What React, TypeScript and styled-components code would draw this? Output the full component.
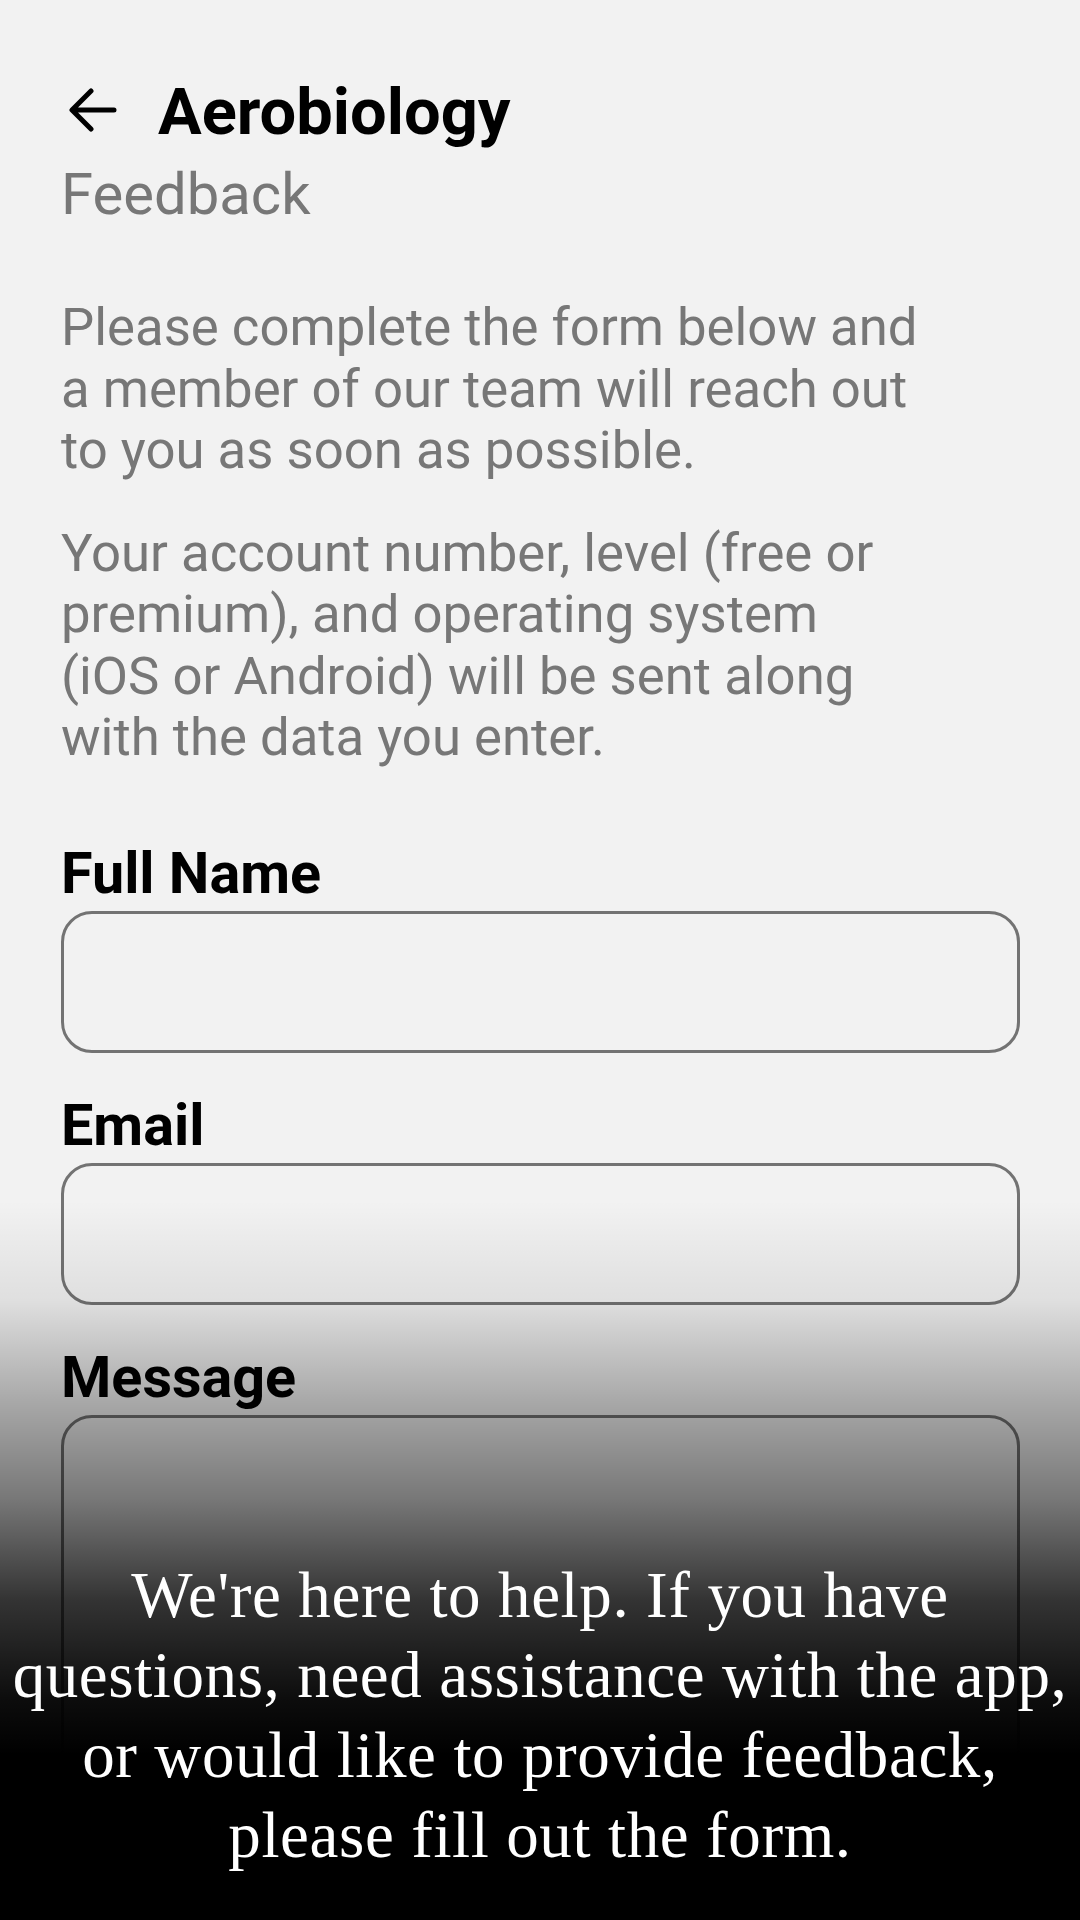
import React from "react";
import styled, { createGlobalStyle } from "styled-components";

const GlobalStyle = createGlobalStyle`
  html, body {
    margin: 0;
    padding: 0;
    background: #f2f2f2;
    overflow: hidden;
  }
  * { box-sizing: border-box; }
`;

const Screen = styled.div`
  position: relative;
  width: 1080px;
  height: 1920px;
  overflow: hidden;
  background: #f2f2f2;
  padding: 76px 60px 0 61px;
  font-family: Roboto, "Noto Sans", sans-serif;
  display: flex;
  flex-direction: column;
`;

const Header = styled.header`
  display: flex;
  align-items: center;
  gap: 41px;
  height: 72px;
`;

const BackButton = styled.button`
  display: flex;
  align-items: center;
  justify-content: center;
  margin-left: 8px;
  margin-top: -4px;
  padding: 0;
  border: none;
  background: none;
  color: #000;
  width: 48px;
  height: 44px;
`;

const Title = styled.h1`
  margin: 0;
  font-size: 65px;
  line-height: 72px;
  font-weight: 700;
  color: #000;
`;

const Subtitle = styled.h2`
  margin: 12px 0 0;
  font-size: 58px;
  line-height: 68px;
  font-weight: 400;
  color: #777777;
`;

const Intro = styled.div`
  margin-top: 69px;
  display: flex;
  flex-direction: column;
  gap: 41px;
`;

const Paragraph = styled.p`
  margin: 0;
  font-size: 52.7px;
  line-height: 61.5px;
  color: #777777;
  white-space: nowrap;
`;

const Form = styled.form`
  margin-top: 73px;
  display: flex;
  flex-direction: column;
  gap: 41px;
`;

const Field = styled.label`
  display: flex;
  flex-direction: column;
  gap: 5px;
`;

const FieldLabel = styled.span`
  font-size: 57.5px;
  line-height: 64px;
  font-weight: 700;
  color: #000;
`;

const boxStyles = `
  width: 959px;
  border: 3px solid #737373;
  border-radius: 31px;
  background: transparent;
  font: inherit;
  outline: none;
`;

const Input = styled.input`
  ${boxStyles}
  height: 142px;
`;

const TextArea = styled.textarea`
  ${boxStyles}
  height: 480px;
  resize: none;
`;

const Overlay = styled.div`
  position: absolute;
  left: 0;
  right: 0;
  bottom: 0;
  height: 720px;
  display: flex;
  flex-direction: column;
  justify-content: flex-end;
  align-items: center;
  padding-bottom: 45px;
  background: linear-gradient(
    to bottom,
    rgba(0, 0, 0, 0) 0%,
    rgba(0, 0, 0, 0.08) 13.9%,
    rgba(0, 0, 0, 0.3) 27.8%,
    rgba(0, 0, 0, 0.51) 41.7%,
    rgba(0, 0, 0, 0.79) 55.6%,
    rgba(0, 0, 0, 0.95) 69.4%,
    rgba(0, 0, 0, 1) 77%,
    rgba(0, 0, 0, 1) 100%
  );
`;

const Caption = styled.p`
  margin: 0;
  font-family: "Liberation Serif", "DejaVu Serif", serif;
  font-size: 65px;
  line-height: 80px;
  letter-spacing: 0.6px;
  color: #ffffff;
  text-align: center;
  white-space: nowrap;
`;

const ArrowIcon = () => (
  <svg width="48" height="44" viewBox="0 0 48 44" fill="none">
    <path
      d="M45 22H4M22 3L3 22l19 19"
      stroke="currentColor"
      strokeWidth="5"
      strokeLinecap="round"
      strokeLinejoin="round"
    />
  </svg>
);

export default function App() {
  return (
    <>
      <GlobalStyle />
      <Screen>
        <Header>
          <BackButton aria-label="Back">
            <ArrowIcon />
          </BackButton>
          <Title>Aerobiology</Title>
        </Header>
        <Subtitle>Feedback</Subtitle>
        <Intro>
          <Paragraph>
            Please complete the form below and
            <br />
            a member of our team will reach out
            <br />
            to you as soon as possible.
          </Paragraph>
          <Paragraph>
            Your account number, level (free or
            <br />
            premium), and operating system
            <br />
            (iOS or Android) will be sent along
            <br />
            with the data you enter.
          </Paragraph>
        </Intro>
        <Form onSubmit={(e) => e.preventDefault()}>
          <Field>
            <FieldLabel>Full Name</FieldLabel>
            <Input type="text" />
          </Field>
          <Field>
            <FieldLabel>Email</FieldLabel>
            <Input type="email" />
          </Field>
          <Field>
            <FieldLabel>Message</FieldLabel>
            <TextArea />
          </Field>
        </Form>
        <Overlay>
          <Caption>
            We're here to help. If you have
            <br />
            questions, need assistance with the app,
            <br />
            or would like to provide feedback,
            <br />
            please fill out the form.
          </Caption>
        </Overlay>
      </Screen>
    </>
  );
}
